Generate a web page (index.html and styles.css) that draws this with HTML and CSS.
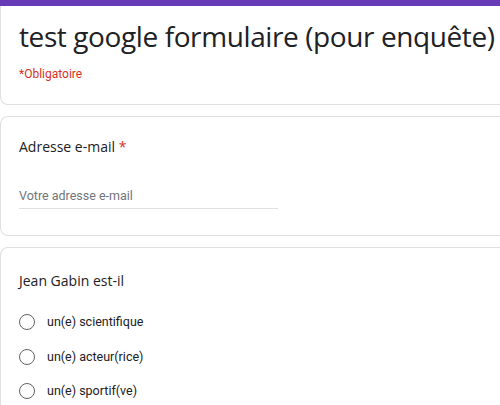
FILE: index.html
```html
<!DOCTYPE html>
<html lang="fr">
<head>
<meta charset="utf-8">
<link rel="stylesheet" href="styles.css">
</head>
<body>
<div class="page">
  <div class="card header">
    <h1 class="title">test google formulaire (pour enquête)</h1>
    <div class="required-note">*Obligatoire</div>
  </div>
  <div class="card question">
    <div class="q-title">Adresse e-mail <span class="star">*</span></div>
    <div class="input">Votre adresse e-mail</div>
  </div>
  <div class="card question">
    <div class="q-title">Jean Gabin est-il</div>
    <div class="options">
      <label class="option"><span class="radio"></span><span class="opt-text">un(e) scientifique</span></label>
      <label class="option"><span class="radio"></span><span class="opt-text">un(e) acteur(rice)</span></label>
      <label class="option"><span class="radio"></span><span class="opt-text">un(e) sportif(ve)</span></label>
    </div>
  </div>
</div>
</body>
</html>
```
FILE: styles.css
```css
* { box-sizing: border-box; }
html, body { margin: 0; padding: 0; background: #fff; overflow: hidden; }
body { width: 500px; height: 405px; }
.page {
  border-top: 6px solid #673ab7;
  display: flex;
  flex-direction: column;
  gap: 11px;
  height: 405px;
  overflow: hidden;
}
.card {
  background: #fff;
  border: 1px solid #e0e0e0;
  border-top: none;
  border-right: none;
  border-radius: 0 0 0 8px;
  width: 520px;
  padding-left: 18px;
  flex: none;
}
.card.question {
  border-top: 1px solid #e0e0e0;
  border-radius: 8px 0 0 8px;
}
.header { height: 99px; padding-top: 10px; }
.title {
  margin: 0;
  font-family: "Open Sans", sans-serif;
  font-weight: 400;
  font-size: 28px;
  line-height: 40px;
  color: #202124;
  letter-spacing: -0.4px;
}
.required-note {
  margin-top: 11px;
  font-family: Roboto, sans-serif;
  font-size: 12px;
  color: #d93025;
}
.question:nth-child(2) { height: 120px; padding-top: 20px; }
.question:nth-child(3) { padding-top: 23px; height: 180px; }
.q-title {
  font-family: "Open Sans", sans-serif;
  font-size: 14px;
  color: #202124;
  line-height: 20px;
}
.star { color: #d93025; }
.input {
  margin-top: 31px;
  width: 259px;
  font-family: Roboto, sans-serif;
  font-size: 12.5px;
  color: #70757a;
  padding-bottom: 5px;
  border-bottom: 1px solid #e0e0e0;
}
.options {
  margin-top: 22px;
  display: flex;
  flex-direction: column;
  gap: 16.5px;
}
.option {
  display: flex;
  align-items: center;
  gap: 12px;
  font-family: Roboto, sans-serif;
  font-size: 12.5px;
  color: #202124;
}
.radio {
  width: 16px;
  height: 16px;
  border: 1.5px solid #5f6368;
  border-radius: 50%;
  flex: none;
}
.opt-text { line-height: 18px; }
```
